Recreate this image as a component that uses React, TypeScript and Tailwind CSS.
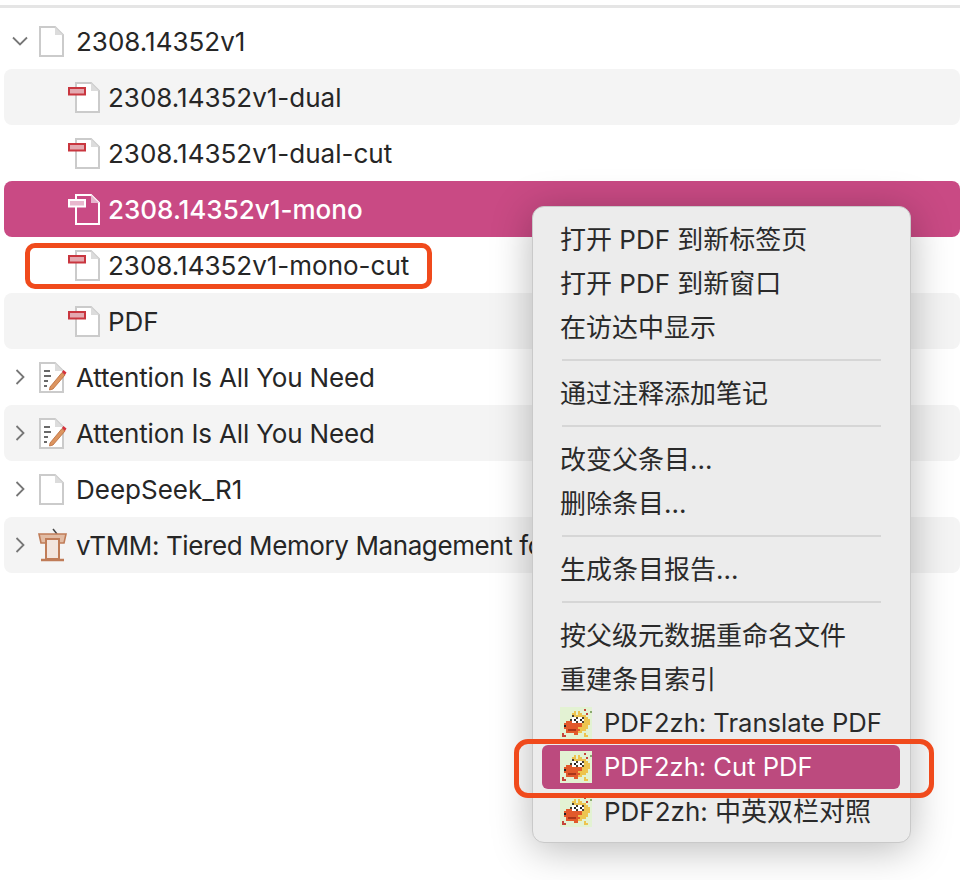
const sans = "font-['Inter','Noto_Sans_CJK_SC',sans-serif]";

const DocShape = ({ stroke, fill = "#ffffff", fold = "#dcdcdc" }: { stroke: string; fill?: string; fold?: string }) => (
  <>
    <path d="M2 2H17L25 10V31H2Z" fill={fill} stroke={stroke} strokeWidth="2" />
    <path d="M17 2V10H25Z" fill={fold} />
  </>
);

const PlainDoc = () => (
  <svg width="27" height="33" viewBox="0 0 27 33" className="shrink-0">
    <DocShape stroke="#cbcbcb" />
  </svg>
);

const PdfDoc = ({ active }: { active?: boolean }) => (
  <svg width="34" height="33" viewBox="0 0 34 33" className="shrink-0">
    <g transform="translate(6 0)">
      <DocShape stroke={active ? "#ffffff" : "#cbcbcb"} fill={active ? "#c94a84" : "#ffffff"} fold={active ? "#e6b5cd" : "#dcdcdc"} />
    </g>
    <rect x="1" y="7" width="16" height="6.5" fill={active ? "#e8b8ce" : "#e3a9b0"} stroke={active ? "#ffffff" : "#c9363f"} strokeWidth="2" />
  </svg>
);

const NoteDoc = () => (
  <svg width="29" height="33" viewBox="0 0 29 33" className="shrink-0">
    <DocShape stroke="#cbcbcb" />
    <path d="M6 10H12M6 15H13M6 20H10M6 25H9" stroke="#3a3a3a" strokeWidth="1.6" />
    <path d="M12 26L24 11.5L27 14L15 28L11.5 29Z" fill="#dc9560" stroke="#b9693a" strokeWidth="0.8" />
    <path d="M24 11L25.5 9L28.5 11.5L27 14Z" fill="#d6323c" />
  </svg>
);

const Podium = () => (
  <svg width="30" height="34" viewBox="0 0 30 34" className="shrink-0">
    <path d="M15 1L19 6" stroke="#444444" strokeWidth="1.5" />
    <path d="M1 6H28L26 15H3Z" fill="#e2bca4" stroke="#c07c58" strokeWidth="1.6" />
    <path d="M8 11H21V31H8Z" fill="#f3e5de" stroke="#c07c58" strokeWidth="2" />
    <path d="M3 32H26" stroke="#c07c58" strokeWidth="2.4" />
  </svg>
);

const Chevron = ({ open }: { open?: boolean }) => (
  <svg width="18" height="18" viewBox="0 0 18 18" className="shrink-0" fill="none" stroke="#777777" strokeWidth="1.8">
    {open ? <path d="M2 5.5L9 12.5L16 5.5" /> : <path d="M5.5 2L12.5 9L5.5 16" />}
  </svg>
);

// pixel art icon, one letter per 2px cell
const dragonMap = [
  "................",
  "............r...",
  ".......y.y.....g",
  "......yy.yy..r..",
  "......dyyyyyy...",
  "......wwdwwdyy..",
  ".....dwkwwkwyyy.",
  "...ooowwdwwdyyy.",
  "..oooooooooyyyy.",
  "..kooooooooyyy..",
  "..oooooooyyyyy..",
  "...ollllooyyy...",
  "...ooooooyy.....",
  ".r.....oo...y...",
  ".rr.........yy..",
  "................",
];

const dragonColors: Record<string, string> = {
  y: "#edc44f",
  o: "#e2592b",
  w: "#ffffff",
  k: "#222222",
  d: "#4a4030",
  r: "#c6453a",
  g: "#8aa870",
  l: "#a8361a",
};

const Dragon = () => (
  <svg width="32" height="32" viewBox="0 0 16 16" className="shrink-0" shapeRendering="crispEdges">
    <rect width="16" height="16" fill="#e3f2d3" />
    {dragonMap.map((line, y) =>
      line.split("").map((c, x) =>
        c === "." ? null : <rect key={`${x}-${y}`} x={x} y={y} width="1" height="1" fill={dragonColors[c]} />
      )
    )}
  </svg>
);

const rows = [
  { label: "2308.14352v1", icon: <PlainDoc />, chevron: "open" },
  { label: "2308.14352v1-dual", icon: <PdfDoc />, child: true, shaded: true },
  { label: "2308.14352v1-dual-cut", icon: <PdfDoc />, child: true },
  { label: "2308.14352v1-mono", icon: <PdfDoc active />, child: true, active: true },
  { label: "2308.14352v1-mono-cut", icon: <PdfDoc />, child: true },
  { label: "PDF", icon: <PdfDoc />, child: true, shaded: true },
  { label: "Attention Is All You Need", icon: <NoteDoc />, chevron: "closed", track: "tracking-[-0.16px]" },
  { label: "Attention Is All You Need", icon: <NoteDoc />, chevron: "closed", shaded: true, track: "tracking-[-0.16px]" },
  { label: "DeepSeek_R1", icon: <PlainDoc />, chevron: "closed" },
  { label: "vTMM: Tiered Memory Management fo", icon: <Podium />, chevron: "closed", shaded: true, track: "tracking-[-0.4px]" },
];

const Row = ({ row }: { row: (typeof rows)[number] }) => {
  const bg = row.active
    ? "bg-[#c94a84] text-white font-medium"
    : row.shaded
      ? "bg-[#f4f4f4] text-[#262626]"
      : "text-[#262626]";
  return (
    <div className={`ml-1 flex h-14 items-center overflow-hidden whitespace-nowrap rounded-lg ${bg}`}>
      {row.child ? (
        <div className="flex w-[104px] shrink-0 pl-[64px]">{row.icon}</div>
      ) : (
        <div className="flex w-[72px] shrink-0 items-center pl-[7px]">
          <Chevron open={row.chevron === "open"} />
          <div className="ml-[9px]">{row.icon}</div>
        </div>
      )}
      <span className={`text-[26px] ${row.track ?? ""}`}>{row.label}</span>
    </div>
  );
};

const Item = ({ label, icon, active, narrow }: { label: string; icon?: boolean; active?: boolean; narrow?: boolean }) => (
  <div className={`ml-[9px] mr-[10px] flex h-11 items-center rounded-md pl-[18px] whitespace-nowrap ${narrow ? "text-[25.6px]" : "text-[26px]"} ${active ? "bg-[#bc4a7e] text-white" : "text-[#2a2a2a]"}`}>
    {icon && <div className="mr-3"><Dragon /></div>}
    <span>{label}</span>
  </div>
);

const Sep = () => <div className="mx-[29px] my-[10px] h-0.5 bg-[#d6d6d6]" />;

export default function App() {
  return (
    <div className={`relative h-[880px] w-[960px] overflow-hidden bg-white ${sans}`}>
      <div className="mt-[5px] h-[3px] bg-[#e5e5e5]" />
      <div className="pt-[5px]">
        {rows.map((row, i) => (
          <Row key={i} row={row} />
        ))}
      </div>

      {/* outline around the new file */}
      <div className="absolute left-[25px] top-[243px] h-[46px] w-[407px] rounded-[10px] border-[5px] border-[#f04a1c]" />

      {/* context menu */}
      <div className="absolute left-[532px] top-[206px] h-[637px] w-[379px] rounded-xl border border-[#c9c9c9] bg-[#ececec] pt-[10px] shadow-[0_6px_40px_rgba(0,0,0,0.28)]">
        <Item label="打开 PDF 到新标签页" />
        <Item label="打开 PDF 到新窗口" />
        <Item label="在访达中显示" />
        <Sep />
        <Item label="通过注释添加笔记" />
        <Sep />
        <Item label="改变父条目..." />
        <Item label="删除条目..." />
        <Sep />
        <Item label="生成条目报告..." />
        <Sep />
        <Item label="按父级元数据重命名文件" />
        <Item label="重建条目索引" />
        <Item label="PDF2zh: Translate PDF" icon narrow />
        <Item label="PDF2zh: Cut PDF" icon active narrow />
        <Item label="PDF2zh: 中英双栏对照" icon />
      </div>

      {/* outline around the menu item */}
      <div className="absolute left-[514px] top-[739px] h-[59px] w-[420px] rounded-[14px] border-[5px] border-[#f04a1c]" />
    </div>
  );
}
